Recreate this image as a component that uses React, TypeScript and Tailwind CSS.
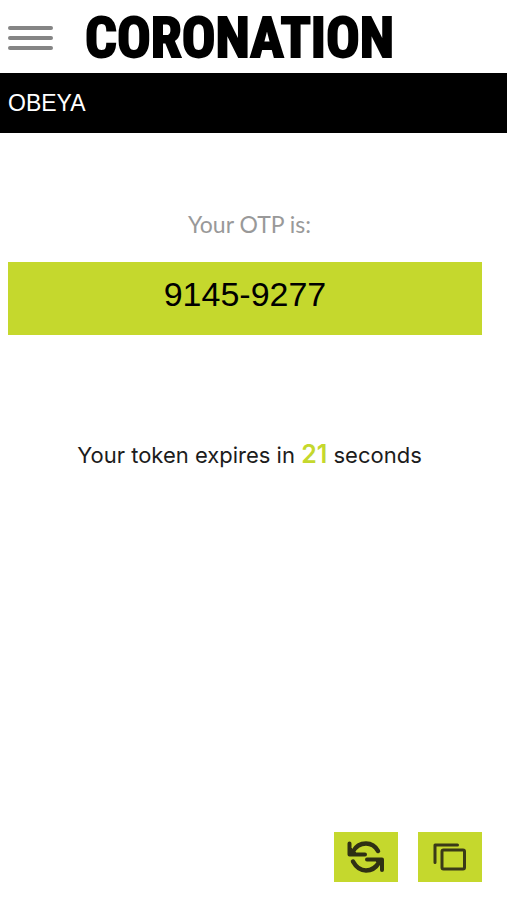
import { useState } from 'react';

const OTP = '9145-9277';

function RefreshIcon() {
  return (
    <svg viewBox="0 0 38 34" className="h-[34px] w-[38px]" fill="none" stroke="#2f3014" aria-hidden="true">
      <path d="M6 11.500C9 6 13 3.500 19 3.500C25 3.500 28.500 6.500 31 11" strokeWidth="4.500" strokeLinecap="round" />
      <path d="M2.500 3.500V14.500H18" strokeLinejoin="round" strokeLinecap="round" strokeWidth="4" />
      <path d="M3 7L10 14H3Z" fill="#2f3014" />
      <path d="M6 21.500C9 27 13 30.500 19 30.500C25 30.500 29 27.500 32 22.500" strokeWidth="4.500" strokeLinecap="round" />
      <path d="M35 30V19.500H20" strokeLinejoin="round" strokeLinecap="round" strokeWidth="4" />
      <path d="M35 27L28 20H35Z" fill="#2f3014" />
    </svg>
  );
}

function CopyIcon() {
  return (
    <svg viewBox="0 0 34 28" className="h-7 w-[34px]" fill="none" stroke="#3a3a18" strokeWidth="3" aria-hidden="true">
      <path d="M2 19.500V2H24.500" strokeLinejoin="round" strokeLinecap="round" />
      <rect x="9" y="7" width="22.500" height="19" rx="1.500" />
    </svg>
  );
}

export default function App() {
  const [otp] = useState(OTP);
  const [seconds] = useState(21);

  return (
    <div className="flex min-h-screen flex-col bg-white font-['Liberation_Sans',Arial,sans-serif] text-black">
      <header className="flex h-[73px] items-center gap-8 px-2 pt-[3px]">
        <button type="button" aria-label="Menu" className="flex w-[45px] shrink-0 flex-col gap-[6px]">
          <span className="h-1 rounded-xs bg-[#858585]" />
          <span className="h-1 rounded-xs bg-[#858585]" />
          <span className="h-1 rounded-xs bg-[#858585]" />
        </button>
        <div className="font-['Roboto_Condensed','Liberation_Sans_Narrow',sans-serif] text-[56px] leading-[68px] font-bold [-webkit-text-stroke:2px_black]">
          CORONATION
        </div>
      </header>

      <div className="flex h-[60px] items-center bg-black px-2 text-[23px] leading-8 text-white">OBEYA</div>

      <main className="flex flex-1 flex-col pt-[75px] pr-4 pb-[18px] pl-2">
        <h1 className="text-center font-['Lato',sans-serif] text-[23px] leading-8 text-[#999999]">Your OTP is:</h1>
        <div className="mt-[22px] mr-[9px] flex h-[73px] justify-center bg-[#c5d82d] pt-3 text-[34px] leading-10">{otp}</div>
        <p className="mt-[103px] text-center font-['Inter',sans-serif] text-[22px] leading-8 text-[#1c1c1c]">
          Your token expires in <span className="text-[25px] leading-8 font-semibold text-[#c5d82d]">{seconds}</span> seconds
        </p>

        <div className="mt-auto mr-[9px] flex justify-end gap-5">
          <button type="button" aria-label="Refresh" className="flex h-[50px] w-16 items-center justify-center bg-[#c5d82d]">
            <RefreshIcon />
          </button>
          <button type="button" aria-label="Copy" className="flex h-[50px] w-16 items-center justify-center bg-[#c5d82d]">
            <CopyIcon />
          </button>
        </div>
      </main>
    </div>
  );
}
